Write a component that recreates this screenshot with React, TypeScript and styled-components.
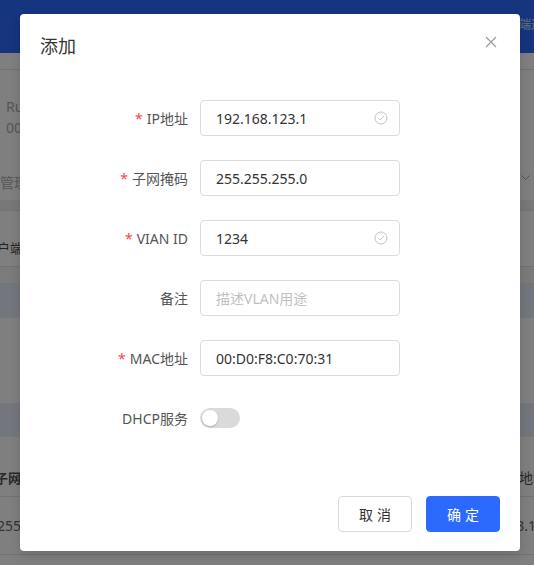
import React from 'react';
import styled, { createGlobalStyle } from 'styled-components';

const GlobalStyle = createGlobalStyle`
  html, body {
    margin: 0;
    padding: 0;
  }
  body {
    font-family: "Noto Sans", "Noto Sans CJK SC", sans-serif;
    font-size: 14px;
    color: #333;
  }
  * {
    box-sizing: border-box;
  }
`;

const Page = styled.div`
  position: relative;
  width: 534px;
  height: 565px;
  overflow: hidden;
  background: #fefefe;
`;

const TopBar = styled.div`
  height: 53px;
  background: #2c6aff;
  display: flex;
  align-items: center;
  padding-left: 507px;
  padding-bottom: 5px;
  white-space: nowrap;
  color: rgba(255, 255, 255, 0.8);
  font-size: 12px;
`;

const SubBar = styled.div`
  height: 17px;
  background: #ffffff;
  border-bottom: 1px solid #e6e6e6;
`;

const Band = styled.div<{ $h: number; $bg?: string; $line?: boolean; $pt?: number }>`
  height: ${(p) => p.$h}px;
  padding-top: ${(p) => p.$pt ?? 0}px;
  background: ${(p) => p.$bg || 'transparent'};
  border-bottom: ${(p) => (p.$line ? '1px solid #e4e4e4' : 'none')};
  display: flex;
  align-items: center;
  justify-content: space-between;
  white-space: nowrap;
  overflow: hidden;
  line-height: 20px;
`;

const BgText = styled.span<{ $c?: string; $x?: number; $bold?: boolean; $size?: number }>`
  color: ${(p) => p.$c || '#aaa'};
  margin-left: ${(p) => p.$x ?? 6}px;
  font-weight: ${(p) => (p.$bold ? 700 : 400)};
  font-size: ${(p) => p.$size ?? 14}px;
`;

const BgRight = styled.span<{ $c?: string; $x: number }>`
  color: ${(p) => p.$c || '#555'};
  margin-right: ${(p) => p.$x}px;
  font-size: 14px;
`;

const Chevron = styled.span`
  margin-right: 4px;
  margin-bottom: 10px;
  display: flex;
`;

const InfoBlock = styled.div`
  height: 90px;
  padding-top: 27px;
  display: flex;
  flex-direction: column;
  gap: 1px;
  line-height: 20px;
  white-space: nowrap;
`;

const Mask = styled.div`
  position: absolute;
  inset: 0;
  background: rgba(0, 0, 0, 0.5);
`;

const Modal = styled.div`
  position: absolute;
  top: 14px;
  left: 20px;
  width: 500px;
  height: 537px;
  background: #fff;
  border-radius: 4px;
  box-shadow: 0 4px 12px rgba(0, 0, 0, 0.15);
  display: flex;
  flex-direction: column;
`;

const ModalHeader = styled.div`
  height: 64px;
  padding: 20px 20px;
  display: flex;
  align-items: center;
  justify-content: space-between;
`;

const Title = styled.div`
  font-size: 18px;
  line-height: 24px;
  color: #333;
`;

const CloseBtn = styled.span`
  display: flex;
  margin-right: 3px;
  margin-top: -8px;
  color: #999;
`;

const Form = styled.div`
  padding-top: 22px;
  display: flex;
  flex-direction: column;
  gap: 24px;
`;

const Row = styled.div`
  display: flex;
  align-items: center;
  height: 36px;
`;

const Label = styled.label`
  width: 180px;
  padding-right: 12px;
  text-align: right;
  color: #555;
  font-size: 14px;
  white-space: nowrap;
`;

const Star = styled.span`
  color: #f5484a;
  margin-right: 4px;
  font-size: 14px;
`;

const Field = styled.div`
  width: 200px;
  height: 36px;
  border: 1px solid #dcdcdc;
  border-radius: 4px;
  display: flex;
  align-items: center;
  justify-content: space-between;
  padding: 0 11px 0 15px;
`;

const Value = styled.span<{ $placeholder?: boolean }>`
  color: ${(p) => (p.$placeholder ? '#bfbfbf' : '#333')};
  font-size: 14px;
`;

const Switch = styled.span<{ $on?: boolean }>`
  position: relative;
  width: 40px;
  height: 20px;
  border-radius: 10px;
  background: ${(p) => (p.$on ? '#2c6aff' : '#dadada')};
  display: inline-block;
  &::after {
    content: '';
    position: absolute;
    top: 2px;
    left: ${(p) => (p.$on ? '22px' : '2px')};
    width: 16px;
    height: 16px;
    border-radius: 50%;
    background: #fff;
    box-shadow: 0 1px 2px rgba(0, 0, 0, 0.2);
  }
`;

const Footer = styled.div`
  margin-top: auto;
  padding: 0 20px 19px;
  display: flex;
  justify-content: flex-end;
  gap: 14px;
`;

const Button = styled.button<{ $primary?: boolean }>`
  width: 74px;
  height: 36px;
  border-radius: 4px;
  font-family: inherit;
  font-size: 14px;
  letter-spacing: 4px;
  padding: 0 0 0 4px;
  cursor: pointer;
  border: 1px solid ${(p) => (p.$primary ? '#2c6aff' : '#d9d9d9')};
  background: ${(p) => (p.$primary ? '#2c6aff' : '#fff')};
  color: ${(p) => (p.$primary ? '#fff' : '#333')};
`;

const CheckIcon = () => (
  <svg width="14" height="14" viewBox="0 0 14 14" fill="none" stroke="#c4c4c4" strokeWidth="1">
    <circle cx="7" cy="7" r="6" />
    <path d="M4.3 7.1 L6.2 9 L9.8 5.2" />
  </svg>
);

const CloseIcon = () => (
  <svg width="12" height="12" viewBox="0 0 12 12" stroke="#999" strokeWidth="1.1">
    <path d="M1 1 L11 11 M11 1 L1 11" />
  </svg>
);

type FieldRow = {
  label: string;
  required?: boolean;
  value?: string;
  placeholder?: string;
  check?: boolean;
};

const rows: FieldRow[] = [
  { label: 'IP地址', required: true, value: '192.168.123.1', check: true },
  { label: '子网掩码', required: true, value: '255.255.255.0' },
  { label: 'VIAN ID', required: true, value: '1234', check: true },
  { label: '备注', placeholder: '描述VLAN用途' },
  { label: 'MAC地址', required: true, value: '00:D0:F8:C0:70:31' },
];

const App = () => {
  return (
    <>
      <GlobalStyle />
      <Page>
        <TopBar>终端运维</TopBar>
        <SubBar />
        <InfoBlock>
          <BgText $c="#a4aebb">Ruijie RG-EG105G</BgText>
          <BgText $c="#a4aebb">00D0F8C07031</BgText>
        </InfoBlock>
        <Band $h={40} $pt={6}>
          <BgText $c="#b0b0b0" $x={0}>
            管理设备
          </BgText>
          <Chevron>
            <svg width="9" height="6" viewBox="0 0 9 6" fill="none" stroke="#aaa">
              <path d="M0.5 0.5 L4.5 4.5 L8.5 0.5" />
            </svg>
          </Chevron>
        </Band>
        <Band $h={11} $bg="#f0f0f0" $line />
        <Band $h={56} $pt={18} $line>
          <BgText $c="#444" $x={-16} $size={13}>
            客户端
          </BgText>
        </Band>
        <Band $h={16} $bg="#f6f6f6" />
        <Band $h={35} $bg="#e6eefa" />
        <Band $h={85} />
        <Band $h={34} $bg="#e6eefa" />
        <Band $h={60} $pt={22} $line>
          <BgText $c="#555" $x={-5} $bold $size={13}>
            子网掩码
          </BgText>
          <BgRight $x={-13}>IP地址</BgRight>
        </Band>
        <Band $h={58} $line>
          <BgText $c="#666" $x={-3}>
            255.255.255.0
          </BgText>
          <BgRight $c="#666" $x={-2}>
            123.1
          </BgRight>
        </Band>
        <Mask />
        <Modal>
          <ModalHeader>
            <Title>添加</Title>
            <CloseBtn>
              <CloseIcon />
            </CloseBtn>
          </ModalHeader>
          <Form>
            {rows.map((r) => (
              <Row key={r.label}>
                <Label>
                  {r.required && <Star>*</Star>}
                  {r.label}
                </Label>
                <Field>
                  <Value $placeholder={!r.value}>{r.value || r.placeholder}</Value>
                  {r.check && <CheckIcon />}
                </Field>
              </Row>
            ))}
            <Row>
              <Label>DHCP服务</Label>
              <Switch />
            </Row>
          </Form>
          <Footer>
            <Button>取消</Button>
            <Button $primary>确定</Button>
          </Footer>
        </Modal>
      </Page>
    </>
  );
};

export default App;
